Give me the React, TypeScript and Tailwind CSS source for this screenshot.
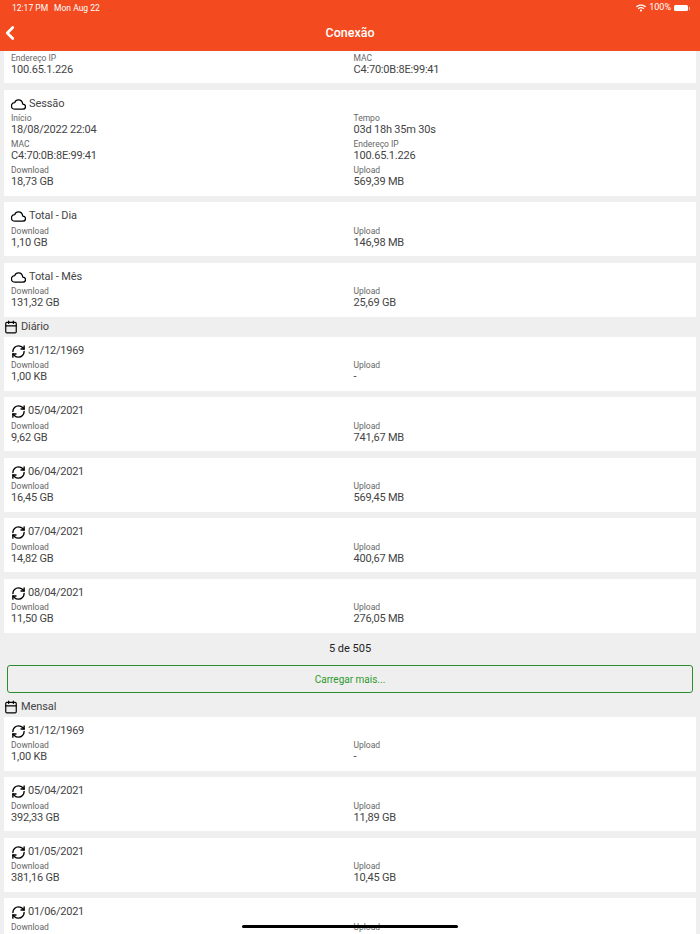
import React from 'react';
import { Calendar, ChevronLeft, RefreshCw } from 'lucide-react';
import { FaWifi } from 'react-icons/fa';
import { IoCloudOutline } from 'react-icons/io5';

type Stat = { label: string; value: string };

const Field: React.FC<Stat> = ({ label, value }) => (
  <div className="h-[26px]">
    <div className="text-[8.5px] leading-[9px] text-[#666]">{label}</div>
    <div className="text-[11px] leading-[13px] tracking-[-0.2px] text-[#444]">{value}</div>
  </div>
);

const Fields: React.FC<{ rows: Stat[] }> = ({ rows }) => (
  <div className="grid grid-cols-2">
    {rows.map((row) => (
      <Field key={row.label} {...row} />
    ))}
  </div>
);

const CloudCard: React.FC<{ title: string; rows: Stat[] }> = ({ title, rows }) => (
  <div className="bg-white pb-[3.5px] pl-[7px] pt-[6.5px]">
    <div className="flex h-[16px] items-center gap-[3px] text-[11px] tracking-[-0.1px] text-[#444]">
      <IoCloudOutline className="h-[15px] w-[15px] text-black [&_path]:[stroke-width:44]" />
      {title}
    </div>
    <div className="mt-[2px]">
      <Fields rows={rows} />
    </div>
  </div>
);

const DayCard: React.FC<{ date: string; down: string; up: string }> = ({ date, down, up }) => (
  <div className="h-[54px] bg-white pl-[7px] pt-[6.5px]">
    <div className="flex h-[16px] items-center gap-[2px] text-[11px] tracking-[-0.25px] text-[#444]">
      <RefreshCw className="h-[15px] w-[15px] text-black" strokeWidth={2.2} />
      {date}
    </div>
    <div className="mt-[2px]">
      <Fields
        rows={[
          { label: 'Download', value: down },
          { label: 'Upload', value: up },
        ]}
      />
    </div>
  </div>
);

const SectionHeader: React.FC<{ title: string }> = ({ title }) => (
  <div className="flex h-[20px] shrink-0 items-center gap-[3px] pt-[1px] text-[11px] tracking-[-0.1px] text-[#444]">
    <Calendar className="h-[14px] w-[14px] text-black" strokeWidth={2} />
    {title}
  </div>
);

const daily = [
  { date: '31/12/1969', down: '1,00 KB', up: '-' },
  { date: '05/04/2021', down: '9,62 GB', up: '741,67 MB' },
  { date: '06/04/2021', down: '16,45 GB', up: '569,45 MB' },
  { date: '07/04/2021', down: '14,82 GB', up: '400,67 MB' },
  { date: '08/04/2021', down: '11,50 GB', up: '276,05 MB' },
];

const monthly = [
  { date: '31/12/1969', down: '1,00 KB', up: '-' },
  { date: '05/04/2021', down: '392,33 GB', up: '11,89 GB' },
  { date: '01/05/2021', down: '381,16 GB', up: '10,45 GB' },
  { date: '01/06/2021', down: '', up: '' },
];

const App: React.FC = () => {
  return (
    <div className="relative flex h-[934px] w-[700px] flex-col overflow-hidden bg-[#efefef] font-['Roboto',sans-serif]">
      <header className="h-[51px] shrink-0 bg-[#f44a1f] text-white">
        <div className="flex h-[16px] items-center justify-between pl-[12px] pr-[10px] text-[8.5px]">
          <div className="flex gap-[6px]">
            <span>12:17 PM</span>
            <span>Mon Aug 22</span>
          </div>
          <div className="flex items-center">
            <FaWifi className="h-[10px] w-[10px]" />
            <span className="ml-[3px] text-[9px]">100%</span>
            <div className="ml-[3px] h-[6px] w-[14px] rounded-[1.5px] bg-white" />
            <div className="ml-[1px] h-[3px] w-[1px] bg-white/60" />
          </div>
        </div>
        <div className="relative flex h-[35px] items-center justify-center text-[12.5px] font-medium">
          <ChevronLeft className="absolute left-[-1px] top-[6px] h-[22px] w-[22px]" strokeWidth={3} />
          Conexão
        </div>
      </header>

      <main className="flex min-h-0 flex-1 flex-col overflow-hidden px-[4px]">
        <div className="shrink-0 bg-white pb-[3.5px] pl-[7px] pt-[2.5px]">
          <Fields
            rows={[
              { label: 'Endereço IP', value: '100.65.1.226' },
              { label: 'MAC', value: 'C4:70:0B:8E:99:41' },
            ]}
          />
        </div>

        <div className="mt-[6.5px] flex shrink-0 flex-col gap-[6.5px]">
          <CloudCard
            title="Sessão"
            rows={[
              { label: 'Início', value: '18/08/2022 22:04' },
              { label: 'Tempo', value: '03d 18h 35m 30s' },
              { label: 'MAC', value: 'C4:70:0B:8E:99:41' },
              { label: 'Endereço IP', value: '100.65.1.226' },
              { label: 'Download', value: '18,73 GB' },
              { label: 'Upload', value: '569,39 MB' },
            ]}
          />
          <CloudCard
            title="Total - Dia"
            rows={[
              { label: 'Download', value: '1,10 GB' },
              { label: 'Upload', value: '146,98 MB' },
            ]}
          />
          <CloudCard
            title="Total - Mês"
            rows={[
              { label: 'Download', value: '131,32 GB' },
              { label: 'Upload', value: '25,69 GB' },
            ]}
          />
        </div>

        <SectionHeader title="Diário" />
        <div className="flex shrink-0 flex-col gap-[6.5px]">
          {daily.map((day) => (
            <DayCard key={day.date} {...day} />
          ))}
        </div>

        <div className="flex h-[32.5px] shrink-0 items-center justify-center pt-[1px] text-[11px] text-[#222]">5 de 505</div>
        <button
          type="button"
          className="mx-[3px] h-[28px] shrink-0 rounded-[3px] border-[1.5px] border-[#2e8b2e] text-[10px] text-[#2e9a2e]"
        >
          Carregar mais...
        </button>

        <div className="mt-[3.5px] shrink-0">
          <SectionHeader title="Mensal" />
        </div>
        <div className="flex shrink-0 flex-col gap-[6.5px]">
          {monthly.map((month) => (
            <DayCard key={month.date} {...month} />
          ))}
        </div>
      </main>

      <div className="absolute bottom-[6px] left-[242px] h-[3px] w-[216px] rounded-full bg-black" />
    </div>
  );
};

export default App;
